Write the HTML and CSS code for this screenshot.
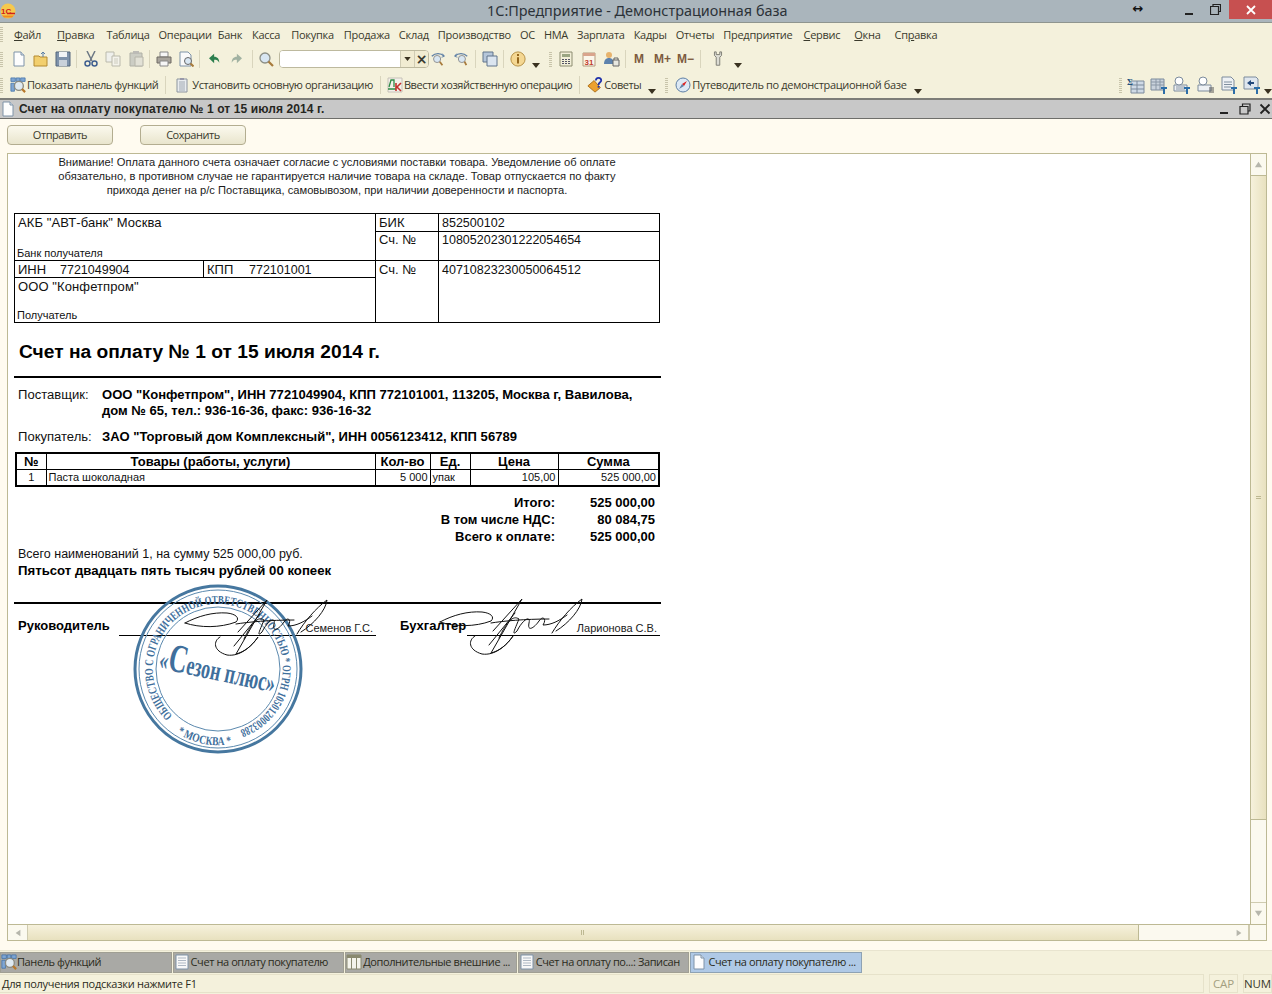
FILE: index.html
```html
<!DOCTYPE html>
<html lang="ru">
<head>
<meta charset="utf-8">
<title>1С:Предприятие - Демонстрационная база</title>
<link rel="stylesheet" href="styles.css">
</head>
<body>
<svg class="defs" width="0" height="0" aria-hidden="true">
  <defs>
    <symbol id="i-page" viewBox="0 0 16 16"><path d="M3 1h7l3 3v11H3z" fill="#fdfdfd" stroke="#7f93a8"/><path d="M10 1v3h3" fill="#d8e2ec" stroke="#7f93a8"/></symbol>
    <symbol id="i-lines" viewBox="0 0 16 16"><path d="M2 1h12v14H2z" fill="#f8f8f8" stroke="#7f93a8"/><path d="M4 4h8M4 6.500h8M4 9h8M4 11.500h8" stroke="#aeb8c4"/></symbol>
    <symbol id="i-panel" viewBox="0 0 18 18"><path d="M1 1h5v4H1zM7 1h4v4H7zM12 1h5v4h-5zM1 7h4v9H1z" fill="#7fa6d2" stroke="#3b6ea8" stroke-width=".8"/><circle cx="10" cy="10" r="5" fill="#dfeaf2" stroke="#8a8a80" stroke-width="1.500"/><path d="M13.500 13.500l3.500 3.500" stroke="#b8782a" stroke-width="2.500"/></symbol>
    <symbol id="i-mag" viewBox="0 0 16 16"><circle cx="7" cy="7" r="5" fill="#d8e6f2" stroke="#8c8f86" stroke-width="1.300"/><path d="M10.500 10.500L15 15" stroke="#a87b3c" stroke-width="2.200"/></symbol>
    <symbol id="i-t" viewBox="0 0 18 18"><path d="M11 11h6v2h-2v5h-2v-5h-2z" fill="#2d6ea8"/></symbol>
    <symbol id="i-arrow" viewBox="0 0 8 5"><path d="M0 0h8L4 5z" fill="#3a3220"/></symbol>
  </defs>
</svg>

<header class="titlebar">
  <svg class="logo" viewBox="0 0 16 16"><circle cx="8" cy="8" r="7.500" fill="#f6c94d"/><path d="M2 12.500h12l-2 2H4z" fill="#f08a20"/><text x="1" y="11" class="logo-text">1С</text><path d="M7 10.500h8" stroke="#d0201c" stroke-width="1.500"/></svg>
  <div class="title-text">1С:Предприятие - Демонстрационная база</div>
  <div class="win-controls">
    <span class="resize">↔</span>
    <svg class="wc-min" viewBox="0 0 10 10"><path d="M0 8h8" stroke="#222" stroke-width="2"/></svg>
    <svg class="wc-max" viewBox="0 0 11 11"><path d="M3 2.500V.5h7.500v7h-2M.5 2.500h8v8h-8z" fill="none" stroke="#222" stroke-width="1.200"/></svg>
    <div class="wc-close"><svg viewBox="0 0 10 10"><path d="M1 1l8 8M9 1l-8 8" stroke="#fff" stroke-width="1.800"/></svg></div>
  </div>
</header>

<nav class="menubar chrome-row">
  <span class="grip"></span>
  <div class="menu">
    <span class="mi"><u>Ф</u>айл</span><span class="mi mi-a2"><u>П</u>равка</span><span class="mi mi-b2">Таблица</span><span class="mi">Операции</span><span class="mi mi-neg">Банк</span><span class="mi mi-1">Касса</span><span class="mi mi-b">Покупка</span><span class="mi mi-1">Продажа</span><span class="mi">Склад</span><span class="mi">Производство</span><span class="mi">ОС</span><span class="mi">НМА</span><span class="mi">Зарплата</span><span class="mi">Кадры</span><span class="mi">Отчеты</span><span class="mi">Предприятие</span><span class="mi mi-b"><u>С</u>ервис</span><span class="mi mi-a"><u>О</u>кна</span><span class="mi mi-a">Сп<u>р</u>авка</span>
  </div>
</nav>

<div class="toolbar chrome-row">
  <span class="grip"></span>
  <svg class="ti ml8"><use href="#i-page"/></svg>
  <svg class="ti" viewBox="0 0 16 16"><path d="M1 5h5l1 1h7v9H1z" fill="#f2cf6e" stroke="#b48a30"/><path d="M10 6V1M8 3l2-2 2 2" fill="none" stroke="#5a7ea6"/></svg>
  <svg class="ti" viewBox="0 0 16 16"><path d="M1 1h14v14H1z" fill="#7f93ab" stroke="#55677c"/><path d="M4 1h8v5H4z" fill="#f2f4f6"/><path d="M4 9h8v6H4z" fill="#c9d1da"/></svg>
  <span class="sep"></span>
  <svg class="ti" viewBox="0 0 16 16"><path d="M4 0l5 10M12 0L7 10" stroke="#6d7885" stroke-width="1.500"/><circle cx="4.500" cy="12.500" r="2.500" fill="none" stroke="#3f5f8f" stroke-width="1.500"/><circle cx="11.500" cy="12.500" r="2.500" fill="none" stroke="#3f5f8f" stroke-width="1.500"/></svg>
  <svg class="ti dim" viewBox="0 0 16 16"><path d="M1 1h8v10H1z" fill="#eef0f2" stroke="#a8a89c"/><path d="M7 5h8v10H7z" fill="#f4f4f0" stroke="#a8a89c"/><path d="M9 8h4M9 10h4M9 12h4" stroke="#c0c0b4"/></svg>
  <svg class="ti dim ml7" viewBox="0 0 16 16"><path d="M2 2h12v13H2z" fill="#bfc2bd" stroke="#9a9c94"/><path d="M5 0h6v3H5z" fill="#aaa"/><path d="M7 6h8v9H7z" fill="#dcdcd4" stroke="#a0a098"/></svg>
  <span class="sep"></span>
  <svg class="ti" viewBox="0 0 16 16"><path d="M4 1h8v5H4z" fill="#f6f6f6" stroke="#888"/><path d="M1 6h14v6H1z" fill="#a8a49c" stroke="#6f6b64"/><path d="M4 10h8v5H4z" fill="#f6f6f6" stroke="#888"/></svg>
  <svg class="ti" viewBox="0 0 16 16"><path d="M2 1h8l3 3v11H2z" fill="#fafafa" stroke="#7f93a8"/><circle cx="10" cy="10" r="3.500" fill="#d9e7f3" stroke="#666"/><path d="M12.500 12.500l3 3" stroke="#a87b3c" stroke-width="2"/></svg>
  <span class="sep"></span>
  <svg class="ti ml9 small" viewBox="0 0 14 14"><path d="M0 6l6-5v3.500c4 0 6 2.500 6 7-1.500-3-3-3.500-6-3.500V12z" fill="#2c7f4e"/></svg>
  <svg class="ti dim2 small ml9" viewBox="0 0 14 14"><path d="M14 6L8 1v3.500c-4 0-6 2.500-6 7 1.500-3 3-3.500 6-3.500V12z" fill="#8da394"/></svg>
  <span class="sep sep-t"></span>
  <svg class="ti ml5"><use href="#i-mag"/></svg>
  <div class="searchbox"><span class="search-field"></span><span class="sb-btn"><svg class="mini"><use href="#i-arrow"/></svg></span><span class="sb-btn sb-x">×</span></div>
  <svg class="ti ml1" viewBox="0 0 18 16"><path d="M2 5c4-4 10-4 14 0" fill="none" stroke="#5e7fa5" stroke-width="1.500"/><path d="M14 2l2 3-3 1" fill="none" stroke="#5e7fa5"/><circle cx="8" cy="8" r="4" fill="#d8e6f2" stroke="#888"/><path d="M11 11l3 4" stroke="#a87b3c" stroke-width="2"/></svg>
  <svg class="ti ml7" viewBox="0 0 18 16"><path d="M2 5c4-4 10-4 14 0" fill="none" stroke="#5e7fa5" stroke-width="1.500"/><path d="M4 2L2 5l3 1" fill="none" stroke="#5e7fa5"/><circle cx="10" cy="8" r="4" fill="#d8e6f2" stroke="#888"/><path d="M13 11l2 4" stroke="#a87b3c" stroke-width="2"/></svg>
  <span class="sep sep-n"></span>
  <svg class="ti" viewBox="0 0 16 16"><path d="M1 1h10v10H1z" fill="#b5c6da" stroke="#60748c"/><path d="M5 5h10v10H5z" fill="#dbe5f0" stroke="#60748c"/></svg>
  <span class="sep"></span>
  <svg class="ti" viewBox="0 0 18 18"><circle cx="9" cy="9" r="8" fill="#f4d792" stroke="#b0883a"/><path d="M8 7h2v7H8zM8 3.500h2v2H8z" fill="#8a5a10"/></svg>
  <svg class="drop" viewBox="0 0 8 5"><use href="#i-arrow"/></svg>
  <span class="grip grip-mid"></span>
  <svg class="ti" viewBox="0 0 16 16"><path d="M2 1h12v14H2z" fill="#f2efd8" stroke="#8c8c70"/><path d="M4 3h8v3H4z" fill="#9aa582"/><path d="M4 8h2v1H4zM7 8h2v1H7zM10 8h2v1h-2zM4 10h2v1H4zM7 10h2v1H7zM10 10h2v1h-2zM4 12h2v1H4zM7 12h2v1H7zM10 12h2v1h-2z" fill="#556"/></svg>
  <svg class="ti ml7" viewBox="0 0 16 16"><path d="M2 2h12v13H2z" fill="#fbf6ea" stroke="#b39a7c"/><path d="M2 2h12v3H2z" fill="#d9a48c"/><text x="8" y="13.500" class="cal">31</text></svg>
  <svg class="ti ml7" viewBox="0 0 16 16"><circle cx="5" cy="4" r="3" fill="#e7b36d"/><path d="M0 13c0-4 2-6 5-6s5 2 5 6z" fill="#5d82ad"/><path d="M9 9h6v6H9z" fill="#e8e8e0" stroke="#666"/><path d="M10 9V7h4v2" fill="none" stroke="#666"/></svg>
  <span class="sep"></span>
  <span class="mbtn m1">М</span><span class="mbtn m2">М+</span><span class="mbtn m3">М−</span>
  <span class="sep sep-m"></span>
  <svg class="ti ml9" viewBox="0 0 16 18"><path d="M4 1v4l2 2v9h4V7l2-2V1l-2 0v3H6V1z" fill="#dcdcd4" stroke="#77776e"/></svg>
  <svg class="drop drop-t" viewBox="0 0 8 5"><use href="#i-arrow"/></svg>
</div>

<div class="toolbar chrome-row">
  <span class="grip"></span>
  <svg class="ti ml7" viewBox="0 0 18 18"><use href="#i-panel"/></svg>
  <span class="tb-label">Показать панель функций</span>
  <span class="sep sep-l"></span>
  <svg class="ti ml8" viewBox="0 0 16 16"><path d="M3 2h10v13H3z" fill="#e9ecef" stroke="#8c949e"/><path d="M6 1h4v2H6z" fill="#99a"/><path d="M5 5h6M5 7h6M5 9h6M5 11h6M5 13h6" stroke="#a0a8b2"/></svg>
  <span class="tb-label lb2">Установить основную организацию</span>
  <span class="sep sep-l"></span>
  <svg class="ti" viewBox="0 0 16 16"><path d="M1 1h14v14H1z" fill="#f4f1ea" stroke="#c6c2b8"/><path d="M2 10l2-7h3v7M1 12h8" fill="none" stroke="#2e8b46" stroke-width="1.300"/><path d="M9 6v8M14 6l-4 4 4 4" fill="none" stroke="#c3302c" stroke-width="1.600"/></svg>
  <span class="tb-label">Ввести хозяйственную операцию</span>
  <span class="sep sep-l"></span>
  <svg class="ti ml7" viewBox="0 0 18 18"><path d="M1 10l7-6 7 8-6 5z" fill="#eda12e" stroke="#a86a14"/><path d="M10 4c0-4 6-4 6 0 0 2-3 2-3 5" fill="none" stroke="#2233aa" stroke-width="2"/><path d="M12 10h2v2h-2z" fill="#2233aa"/></svg>
  <span class="tb-label">Советы</span>
  <svg class="drop drop-w" viewBox="0 0 8 5"><use href="#i-arrow"/></svg>
  <span class="grip grip-mid"></span>
  <svg class="ti ml7" viewBox="0 0 16 16"><circle cx="8" cy="8" r="7" fill="#dce8f4" stroke="#5e7fa5"/><path d="M12 4L9 9 7 7z" fill="#d22"/><path d="M4 12l3-5 2 2z" fill="#5e7fa5"/></svg>
  <span class="tb-label lb-wide">Путеводитель по демонстрационной базе</span>
  <svg class="drop drop-w" viewBox="0 0 8 5"><use href="#i-arrow"/></svg>
  <div class="tb-right">
    <span class="grip"></span>
    <svg class="ri" viewBox="0 0 18 18"><path d="M4 5h13v12H4z" fill="#cfdae6" stroke="#7c8b9c"/><path d="M10 5v12M4 9h13M4 13h13" stroke="#7c8b9c"/><text x="0" y="9" class="sigma">Σ</text></svg>
    <svg class="ri" viewBox="0 0 18 18"><path d="M1 3h13v11H1z" fill="#c9d2dc" stroke="#7c8b9c"/><path d="M1 6h13M1 9h13M6 3v11M10 3v11" stroke="#8a97a6"/><use href="#i-t"/></svg>
    <svg class="ri" viewBox="0 0 18 18"><path d="M1 9h13v6H1z" fill="#eef1f4" stroke="#7c8b9c"/><path d="M3 11h9M3 13h9" stroke="#8a97a6"/><circle cx="6" cy="5" r="4" fill="#fff" stroke="#7c8b9c"/><use href="#i-t"/></svg>
    <svg class="ri" viewBox="0 0 18 18"><path d="M1 9h13v6H1z" fill="#eef1f4" stroke="#7c8b9c"/><circle cx="6" cy="5" r="4" fill="#fff" stroke="#7c8b9c"/><path d="M12 12h5M12 14h5M12 16h5" stroke="#555"/></svg>
    <svg class="ri" viewBox="0 0 18 18"><path d="M2 1h9l3 3v10H2z" fill="#eef1f4" stroke="#7c8b9c"/><path d="M4 6h8M4 8.500h8M4 11h7" stroke="#7f8e9e"/><use href="#i-t"/></svg>
    <svg class="ri" viewBox="0 0 18 18"><path d="M1 1h12l2 2v10H1z" fill="#dfe6ee" stroke="#7c8b9c"/><path d="M4 7l4-3v2h3v2H8v2z" fill="#23487a"/><use href="#i-t"/></svg>
    <svg class="drop drop-r" viewBox="0 0 8 5"><use href="#i-arrow"/></svg>
  </div>
</div>

<div class="docbar">
  <svg class="docbar-icon"><use href="#i-page"/></svg>
  <span class="docbar-title">Счет на оплату покупателю № 1 от 15 июля 2014 г.</span>
  <div class="docbar-ctrl">
    <svg viewBox="0 0 12 12"><path d="M1 10h8" stroke="#222" stroke-width="2"/></svg>
    <svg viewBox="0 0 12 12"><path d="M3.500 3V1h7.500v7H9M1 3.500h8v7.500H1z" fill="none" stroke="#222" stroke-width="1.200"/></svg>
    <svg viewBox="0 0 12 12"><path d="M1.500 1.500l9 9M10.500 1.500l-9 9" stroke="#222" stroke-width="1.800"/></svg>
  </div>
</div>

<main class="workspace">
  <div class="actions">
    <button class="btn" type="button">Отправить</button>
    <button class="btn" type="button">Сохранить</button>
  </div>

  <div class="viewer">
    <div class="viewer-top">
      <div class="page-view">
        <article class="sheet">
          <p class="notice">Внимание! Оплата данного счета означает согласие с условиями поставки товара. Уведомление об оплате<br>обязательно, в противном случае не гарантируется наличие товара на складе. Товар отпускается по факту<br>прихода денег на р/с Поставщика, самовывозом, при наличии доверенности и паспорта.</p>

          <table class="bank">
            <colgroup><col class="c-inn"><col class="c-kpp"><col class="c-bik"><col class="c-num"></colgroup>
            <tr class="r1">
              <td colspan="2" rowspan="2" class="cell-stack"><div class="stack"><span>АКБ "АВТ-банк" Москва</span><small>Банк получателя</small></div></td>
              <td>БИК</td><td class="num">852500102</td>
            </tr>
            <tr class="r2"><td class="top">Сч. №</td><td class="top num">10805202301222054654</td></tr>
            <tr class="r3">
              <td class="mid"><span class="pair"><span>ИНН</span><span class="num">7721049904</span></span></td>
              <td class="mid"><span class="pair"><span>КПП</span><span class="num">772101001</span></span></td>
              <td rowspan="2" class="top top2">Сч. №</td><td rowspan="2" class="top top2 num">40710823230050064512</td>
            </tr>
            <tr class="r4"><td colspan="2" class="cell-stack"><div class="stack"><span>ООО "Конфетпром"</span><small>Получатель</small></div></td></tr>
          </table>

          <h1 class="inv-title">Счет на оплату № 1 от 15 июля 2014 г.</h1>
          <hr class="rule">

          <dl class="parties">
            <dt>Поставщик:</dt><dd>ООО "Конфетпром", ИНН 7721049904, КПП 772101001, 113205, Москва г, Вавилова,<br>дом № 65, тел.: 936-16-36, факс: 936-16-32</dd>
            <dt class="gap">Покупатель:</dt><dd class="gap">ЗАО "Торговый дом Комплексный", ИНН 0056123412, КПП 56789</dd>
          </dl>

          <table class="items">
            <colgroup><col class="i1"><col class="i2"><col class="i3"><col class="i4"><col class="i5"><col class="i6"></colgroup>
            <tr><th>№</th><th>Товары (работы, услуги)</th><th>Кол-во</th><th>Ед.</th><th>Цена</th><th>Сумма</th></tr>
            <tr><td class="ctr">1</td><td>Паста шоколадная</td><td class="rt">5 000</td><td>упак</td><td class="rt">105,00</td><td class="rt">525 000,00</td></tr>
          </table>

          <div class="totals">
            <span>Итого:</span><span>525 000,00</span>
            <span>В том числе НДС:</span><span>80 084,75</span>
            <span>Всего к оплате:</span><span>525 000,00</span>
          </div>

          <p class="sum-line">Всего наименований 1, на сумму 525 000,00 руб.</p>
          <p class="sum-words">Пятьсот двадцать пять тысяч рублей 00 копеек</p>
          <hr class="rule rule-sign">

          <div class="signs">
            <b class="sign-role">Руководитель</b>
            <span class="sign-line s1">Семенов Г.С.</span>
            <b class="sign-role role2">Бухгалтер</b>
            <span class="sign-line s2">Ларионова С.В.</span>
          </div>

          <svg class="overlay" viewBox="0 0 660 620">
            <defs>
              <path id="ring-top" d="M172.500 715.500 A65 65 0 1 1 240 730"/>
              <path id="ring-bot" d="M177 733 A76 76 0 0 0 232 744"/>
              <path id="sig" d="M177 469 C190 462 205 458 219 459 C228 460 232 464 228 468 C212 474 192 474 177 469 M212 483 C205 487 205 497 219 501 C232 503 244 492 250 483 C244 492 236 498 228 500 L259 446 L230 478 M226 492 L252 460 M236 485 C244 468 250 462 256 466 C252 476 248 484 254 478 C260 466 268 462 266 470 C264 480 272 474 276 468 C280 462 284 466 280 472 C288 472 296 468 304 462 M289 480 C296 468 308 454 319 446 C318 456 306 470 293 478 M228 470 C240 468 262 466 286 466"/>
            </defs>
            <g transform="translate(-8 -154)">
              <circle cx="218" cy="669" r="83" class="s-outer"/>
              <circle cx="218" cy="669" r="79" class="s-thin"/>
              <circle cx="218" cy="669" r="62" class="s-thin"/>
              <text class="s-ring"><textPath href="#ring-top" textLength="335" lengthAdjust="spacingAndGlyphs">ОБЩЕСТВО С ОГРАНИЧЕННОЙ ОТВЕТСТВЕННОСТЬЮ * ОГРН 1050120003288</textPath></text>
              <text class="s-ring"><textPath href="#ring-bot" textLength="57" lengthAdjust="spacingAndGlyphs">* МОСКВА *</textPath></text>
              <text class="s-name" transform="translate(158 668) rotate(12)" textLength="118" lengthAdjust="spacingAndGlyphs">«<tspan class="s-cap">С</tspan>езон плюс»</text>
            </g>
            <g class="sig-g"><use href="#sig"/></g>
            <g class="sig-g" transform="translate(255 -1)"><use href="#sig"/></g>
          </svg>
        </article>
      </div>
      <div class="vscroll">
        <span class="sc-btn"><svg viewBox="0 0 10 10"><path d="M5 2l4 6H1z"/></svg></span>
        <span class="sc-thumb-v"><i></i></span>
        <span class="sc-rest-v"></span>
        <span class="sc-btn"><svg viewBox="0 0 10 10"><path d="M5 8L1 2h8z"/></svg></span>
      </div>
    </div>
    <div class="hscroll">
      <span class="sc-btn-h"><svg viewBox="0 0 10 10"><path d="M2 5l6-4v8z"/></svg></span>
      <span class="sc-thumb-h"><i></i></span>
      <span class="sc-rest-h"></span>
      <span class="sc-btn-h"><svg viewBox="0 0 10 10"><path d="M8 5L2 1v8z"/></svg></span>
      <span class="sc-corner"></span>
    </div>
  </div>
</main>

<div class="taskbar">
  <div class="task"><svg class="task-icon" viewBox="0 0 18 18"><use href="#i-panel"/></svg><span>Панель функций</span></div>
  <div class="task"><svg class="task-icon"><use href="#i-lines"/></svg><span>Счет на оплату покупателю</span></div>
  <div class="task"><svg class="task-icon" viewBox="0 0 16 16"><path d="M1 1h14v14H1z" fill="#f4f4ec" stroke="#8a8a70"/><path d="M1 1h14v3H1z" fill="#8a8a70"/><path d="M5.500 4v11M10.500 4v11" stroke="#8a8a70"/></svg><span>Дополнительные внешние ...</span></div>
  <div class="task"><svg class="task-icon"><use href="#i-lines"/></svg><span>Счет на оплату по...: Записан</span></div>
  <div class="task task-active"><svg class="task-icon"><use href="#i-page"/></svg><span>Счет на оплату покупателю ...</span></div>
</div>

<footer class="statusbar">
  <div class="st-main">Для получения подсказки нажмите F1</div>
  <div class="st-key st-off">CAP</div>
  <div class="st-key">NUM</div>
</footer>
</body>
</html>
```

FILE: styles.css
```css
* { box-sizing: border-box; }
html, body { margin: 0; padding: 0; }
body {
  width: 1272px;
  height: 994px;
  overflow: hidden;
  display: flex;
  flex-direction: column;
  background: #f4f1dc;
  font-family: "Liberation Sans", Arial, sans-serif;
  color: #2b2b20;
}
.defs { position: absolute; }

/* window title */
.titlebar {
  height: 23px;
  flex: none;
  display: flex;
  align-items: flex-start;
  position: relative;
  background: #aab5bc;
  border-bottom: 1px solid #8f958f;
}
.logo { width: 16px; height: 16px; margin-top: 3px; flex: none; }
.logo-text { font: bold 8px "Liberation Sans", sans-serif; fill: #d0201c; }
.title-text {
  position: absolute;
  left: 487px;
  top: 2px;
  font: 14.400px/18px "Noto Sans", "Liberation Sans", sans-serif;
  color: #2c3238;
  white-space: nowrap;
}
.win-controls { margin-left: auto; display: flex; align-items: flex-start; }
.resize { font: bold 13px/18px "DejaVu Sans", sans-serif; color: #111; width: 14px; margin-right: 40px; text-align: center; }
.wc-min { width: 10px; height: 10px; margin-top: 6px; margin-right: 15px; }
.wc-max { width: 11px; height: 11px; margin-top: 4px; margin-right: 8px; }
.wc-close { width: 43px; height: 19px; background: #c75050; display: flex; align-items: center; justify-content: center; }
.wc-close svg { width: 10px; height: 10px; }

/* chrome rows */
.chrome-row { flex: none; display: flex; align-items: center; background: #f4f1dc; }
.grip {
  width: 3px;
  height: 15px;
  flex: none;
  background: repeating-linear-gradient(#c8c4aa 0 1px, transparent 1px 2px);
}
.menubar { height: 23px; }
.menu { display: flex; margin-left: 11px; gap: 9px; }
.mi { font: 11px/16px "Open Sans", "Liberation Sans", sans-serif; letter-spacing: -0.27px; white-space: nowrap; color: #3a3a2c; }
.mi-1 { margin-left: 1px; }
.mi-a { margin-left: 5px; }
.mi-a2 { margin-left: 7px; }
.mi-b { margin-left: 2px; }
.mi-b2 { margin-left: 3px; }
.mi-neg { margin-left: -3px; }

.toolbar { height: 26px; }
.ti { width: 16px; height: 16px; flex: none; margin-left: 6px; }
.small { width: 12px; height: 12px; }
.ml1 { margin-left: 1px; }
.ml5 { margin-left: 5px; }
.ml7 { margin-left: 7px; }
.ml8 { margin-left: 8px; }
.ml9 { margin-left: 9px; }
.dim { opacity: .75; }
.dim2 { opacity: .8; }
.sep { width: 1px; height: 18px; background: #d9d5bd; margin-left: 5px; flex: none; }
.sep-t { margin-left: 10px; }
.sep-n { margin-left: 6px; }
.sep-l { margin-left: 7px; }
.sep-m { margin-left: 6px; }
.cal { font: bold 8px "Liberation Sans", sans-serif; fill: #c23b2b; text-anchor: middle; }
.sigma { font: bold 9px "Liberation Serif", serif; fill: #23527f; }
.drop { width: 8px; height: 5px; flex: none; margin-left: 6px; margin-top: 12px; }
.drop-t { margin-left: 8px; }
.drop-w { margin-left: 7px; }
.drop-r { margin-left: 3px; }
.grip-mid { margin-left: 9px; }
.mini { width: 7px; height: 4px; display: block; }
.searchbox {
  display: flex;
  width: 150px;
  height: 18px;
  margin-left: 5px;
  border: 1px solid #bdb99e;
  border-radius: 4px;
  overflow: hidden;
  background: #fff;
}
.search-field { flex: 1; background: #fff; }
.sb-btn { width: 14px; display: flex; align-items: center; justify-content: center; background: #f1ecd2; border-left: 1px solid #d0ccb4; }
.sb-x { font: bold 14px/14px "DejaVu Sans", sans-serif; color: #3a3a30; }
.mbtn { font: bold 12px/16px "Liberation Sans", sans-serif; color: #7d5b3f; flex: none; }
.m1 { margin-left: 8px; }
.m2 { margin-left: 10px; }
.m3 { margin-left: 6px; }

.tb-label { font: 11px/16px "Open Sans", "Liberation Sans", sans-serif; letter-spacing: -0.42px; margin-left: 1px; white-space: nowrap; color: #3a3a2c; }
.lb2 { margin-left: 2px; }
.lb-wide { letter-spacing: -0.34px; }
.tb-right { margin-left: auto; display: flex; align-items: center; }
.ri { width: 18px; height: 18px; margin-left: 5.200px; flex: none; }

/* document bar */
.docbar {
  height: 21px;
  flex: none;
  display: flex;
  align-items: center;
  background: #c8c8c8;
  border-top: 2px solid #7d7d78;
  border-bottom: 1px solid #6e6e6a;
}
.docbar-icon { width: 16px; height: 16px; flex: none; }
.docbar-title { font: bold 12px/14px "Liberation Sans", sans-serif; color: #26261f; margin-left: 3px; letter-spacing: .1px; }
.docbar-ctrl { margin-left: auto; display: flex; gap: 8px; margin-right: 1px; }
.docbar-ctrl svg { width: 12px; height: 12px; }

/* workspace */
.workspace {
  flex: 1;
  min-height: 0;
  display: flex;
  flex-direction: column;
  background: #fffbf0;
  padding: 0 5px 9px 7px;
  border-bottom: 1px solid #e8e4cf;
}
.actions { height: 34px; flex: none; display: flex; gap: 27px; padding-top: 6px; }
.btn {
  width: 106px;
  height: 20px;
  padding: 0;
  border: 1px solid #b3ad90;
  border-radius: 4px;
  background: linear-gradient(#fbf9ee, #e9e5cd);
  font: 11px/16px "Open Sans", "Liberation Sans", sans-serif;
  letter-spacing: -0.45px;
  color: #3a3a2c;
}
.viewer {
  flex: 1;
  min-height: 0;
  display: flex;
  flex-direction: column;
  border: 1px solid #bdb994;
  background: #fff;
}
.viewer-top { flex: 1; min-height: 0; display: flex; }
.page-view { flex: 1; min-width: 0; overflow: hidden; background: #fff; }

/* printed sheet */
.sheet { position: relative; width: 660px; padding: 1px 0 0 6px; color: #111; font-size: 12.500px; line-height: 14px; }
.notice { margin: 0; width: 646px; text-align: center; font-size: 11.150px; line-height: 14px; color: #1c1c1c; }
.bank { border-collapse: collapse; table-layout: fixed; width: 645px; margin-top: 16px; font-size: 13px; }
.bank td { border: 1px solid #000; padding: 0 0 0 3px; vertical-align: middle; line-height: 14px; }
.bank .top { vertical-align: top; padding-top: 1px; }
.bank .top2 { padding-top: 2px; }
.bank .mid { padding-top: 1px; }
.num { font-size: 12.500px; }
.c-inn { width: 189px; }
.c-kpp { width: 172px; }
.c-bik { width: 63px; }
.c-num { width: 221px; }
.r1 { height: 18px; }
.r2 { height: 29px; }
.r3 { height: 17px; }
.r4 { height: 45px; }
.bank .cell-stack { padding: 0; vertical-align: top; }
.stack { display: flex; flex-direction: column; justify-content: space-between; padding: 2px 0 0 3px; letter-spacing: .1px; }
.r1 .stack { height: 45px; }
.r4 .stack { height: 43px; }
.stack small { font-size: 11px; line-height: 12px; margin-left: -1px; letter-spacing: 0; }
.pair { display: flex; gap: 14px; }
.pair span:first-child { width: 28px; }

.inv-title { margin: 19px 0 0 5px; font-size: 19.200px; line-height: 20px; font-weight: bold; color: #000; }
.rule { margin: 14px 0 0 0; width: 647px; height: 2px; border: 0; background: #000; }
.parties { margin: 9px 0 0 4px; display: grid; grid-template-columns: 84px 1fr; font-size: 13.050px; }
.parties dt { font-weight: normal; line-height: 16px; }
.parties dd { margin: 0; font-weight: bold; color: #000; line-height: 16px; }
.parties .gap { margin-top: 10px; }

.items { border-collapse: collapse; table-layout: fixed; width: 643px; margin: 7px 0 0 1px; border: 2px solid #000; }
.items th { border: 1px solid #000; border-top: 0; font-size: 13px; line-height: 15px; height: 16px; padding: 0; color: #000; }
.items td { border: 1px solid #000; border-bottom: 0; font-size: 11px; line-height: 14px; height: 16px; padding: 0 2px; color: #111; }
.items .rt { text-align: right; }
.items .ctr { text-align: center; }
.i1 { width: 30px; } .i2 { width: 329px; } .i3 { width: 55px; } .i4 { width: 40px; } .i5 { width: 88px; } .i6 { width: 101px; }

.totals { display: grid; grid-template-columns: 541px 100px; margin-top: 7px; font-size: 13px; font-weight: bold; line-height: 17px; text-align: right; color: #000; }
.sum-line { margin: 1px 0 0 4px; line-height: 16px; }
.sum-words { margin: 0 0 0 4px; font-size: 13.200px; font-weight: bold; line-height: 17px; color: #000; }
.rule-sign { margin-top: 23px; }

.signs { display: flex; align-items: flex-end; height: 32px; }
.sign-role { font-size: 13px; margin-left: 4px; width: 101px; line-height: 14px; padding-bottom: 3px; flex: none; color: #000; }
.role2 { margin-left: 24px; width: 67px; }
.sign-line { border-bottom: 1px solid #000; font-size: 11px; line-height: 13px; text-align: right; padding-right: 3px; flex: none; color: #222; }
.s1 { width: 257px; }
.s2 { width: 193px; }

/* stamp and signature */
.overlay { position: absolute; left: 0; top: 0; width: 660px; height: 620px; pointer-events: none; }
.s-outer { fill: none; stroke: #46779f; stroke-width: 3px; }
.s-thin { fill: none; stroke: #5b89ae; stroke-width: 1px; }
.s-ring { font: bold 12px "Liberation Serif", serif; fill: #3f6f9c; }
.s-name { font: bold 28px "Liberation Serif", serif; fill: #3f6f9c; }
.s-cap { font-size: 40px; }
.sig-g { fill: none; stroke: #111; stroke-width: 1px; stroke-linejoin: round; stroke-linecap: round; }

/* scrollbars */
.vscroll { width: 16px; flex: none; display: flex; flex-direction: column; border-left: 1px solid #bdb994; background: #fbf9ef; }
.sc-btn { height: 21px; flex: none; display: flex; align-items: center; justify-content: center; }
.sc-btn svg { width: 9px; height: 9px; fill: #b6b6ac; }
.sc-thumb-v { flex: 1; display: flex; align-items: center; justify-content: center; border-top: 1px solid #bdb994; border-bottom: 1px solid #bdb994; background: linear-gradient(90deg, #f6f1dc, #e8e1bf); }
.sc-thumb-v i { width: 5px; height: 4px; background: repeating-linear-gradient(#bdb892 0 1px, transparent 1px 2px); }
.sc-rest-v { height: 83px; flex: none; background: #fbf9ef; border-bottom: 1px solid #cfcbb0; }
.hscroll { height: 16px; flex: none; display: flex; border-top: 1px solid #bdb994; background: #fbf9ef; }
.sc-btn-h { width: 20px; flex: none; display: flex; align-items: center; justify-content: center; border-right: 1px solid #cfcbb0; }
.sc-btn-h svg { width: 8px; height: 8px; fill: #b6b6ac; }
.sc-thumb-h { width: 1111px; flex: none; display: flex; align-items: center; justify-content: center; border-right: 1px solid #bdb994; background: linear-gradient(#f6f1dc, #e8e1bf); }
.sc-thumb-h i { width: 4px; height: 5px; background: repeating-linear-gradient(90deg, #bdb892 0 1px, transparent 1px 2px); }
.sc-rest-h { width: 90px; flex: none; }
.sc-corner { flex: 1; border-left: 1px solid #cfcbb0; }

/* task bar */
.taskbar { height: 23px; flex: none; display: flex; gap: 1px; background: #f4f1dc; padding-top: 1px; }
.task {
  width: 171.600px;
  height: 21px;
  display: flex;
  align-items: center;
  padding-bottom: 1px;
  background: #a9a9a5;
  border: 1px solid #a09f93;
  white-space: nowrap;
  overflow: hidden;
  font: 11px/16px "Open Sans", "Liberation Sans", sans-serif;
  letter-spacing: -0.4px;
  color: #2b2b20;
}
.task-active { background: #afc9e6; border-color: #8ea2b3; }
.task-icon { width: 16px; height: 16px; flex: none; margin-right: 1px; }
.task:first-child .task-icon { margin-right: 0; }

/* status bar */
.statusbar { height: 20px; flex: none; display: flex; gap: 5px; padding-bottom: 1px; }
.st-main { width: 1204px; padding-left: 2px; font: 11px/17px "Open Sans", "Liberation Sans", sans-serif; letter-spacing: -0.27px; border: 1px solid #e6e2ca; border-left: 0; color: #2b2b20; }
.st-key { width: 29px; text-align: center; font: 11.500px/17px "Open Sans", "Liberation Sans", sans-serif; letter-spacing: -0.2px; border: 1px solid #e6e2ca; color: #3a3a2c; }
.st-off { color: #a39f80; }
```
